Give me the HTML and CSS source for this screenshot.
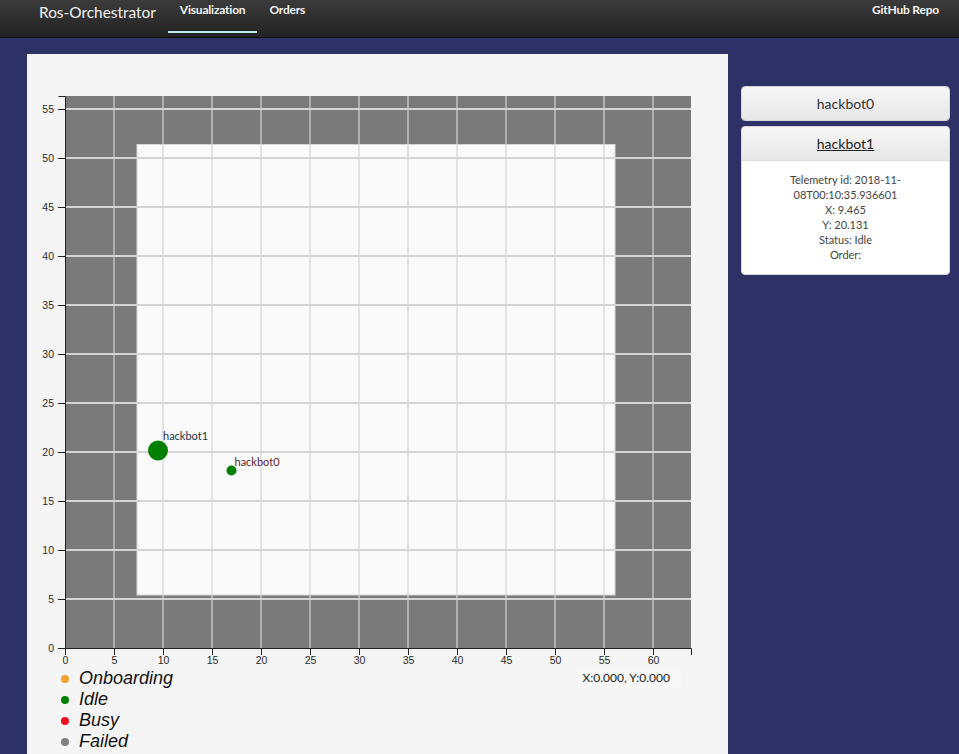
FILE: index.html
```html
<!DOCTYPE html>
<html>
<head>
<meta charset="utf-8">
<link rel="stylesheet" href="styles.css">
</head>
<body>
<nav class="navbar">
  <div class="brand">Ros-Orchestrator</div>
  <a class="nav-item active">Visualization</a>
  <a class="nav-item">Orders</a>
  <a class="nav-item right">GitHub Repo</a>
</nav>
<div class="layout">
  <main class="panel">
    <svg class="chart" width="701" height="614" viewBox="27 54 701 614" xmlns="http://www.w3.org/2000/svg">
      <rect x="65" y="96" width="626" height="552" fill="#7a7a7a"/>
      <rect x="137" y="144.5" width="478" height="450.5" fill="#fafafa" stroke="#d8d8d8" stroke-width="1"/>
      <g stroke="#d4d4d4" stroke-width="1.2">
        <line x1="114" y1="96" x2="114" y2="648"/>
        <line x1="163" y1="96" x2="163" y2="648"/>
        <line x1="212" y1="96" x2="212" y2="648"/>
        <line x1="261" y1="96" x2="261" y2="648"/>
        <line x1="310" y1="96" x2="310" y2="648"/>
        <line x1="359" y1="96" x2="359" y2="648"/>
        <line x1="408" y1="96" x2="408" y2="648"/>
        <line x1="457" y1="96" x2="457" y2="648"/>
        <line x1="506" y1="96" x2="506" y2="648"/>
        <line x1="555" y1="96" x2="555" y2="648"/>
        <line x1="604" y1="96" x2="604" y2="648"/>
        <line x1="653" y1="96" x2="653" y2="648"/>
      </g>
      <g stroke="#d4d4d4" stroke-width="1.8">
        <line x1="65" y1="599" x2="691" y2="599"/>
        <line x1="65" y1="550" x2="691" y2="550"/>
        <line x1="65" y1="501" x2="691" y2="501"/>
        <line x1="65" y1="452" x2="691" y2="452"/>
        <line x1="65" y1="403" x2="691" y2="403"/>
        <line x1="65" y1="354" x2="691" y2="354"/>
        <line x1="65" y1="305" x2="691" y2="305"/>
        <line x1="65" y1="256" x2="691" y2="256"/>
        <line x1="65" y1="207" x2="691" y2="207"/>
        <line x1="65" y1="158" x2="691" y2="158"/>
        <line x1="65" y1="109" x2="691" y2="109"/>
      </g>
      <g stroke="#222" stroke-width="1" fill="none">
        <path d="M58.5 96.5 H65.5 V648.5 H691.5 V655"/>
        <g>
          <line x1="58" y1="648.5" x2="65" y2="648.5"/>
          <line x1="58" y1="599.5" x2="65" y2="599.5"/>
          <line x1="58" y1="550.5" x2="65" y2="550.5"/>
          <line x1="58" y1="501.5" x2="65" y2="501.5"/>
          <line x1="58" y1="452.5" x2="65" y2="452.5"/>
          <line x1="58" y1="403.5" x2="65" y2="403.5"/>
          <line x1="58" y1="354.5" x2="65" y2="354.5"/>
          <line x1="58" y1="305.5" x2="65" y2="305.5"/>
          <line x1="58" y1="256.5" x2="65" y2="256.5"/>
          <line x1="58" y1="207.5" x2="65" y2="207.5"/>
          <line x1="58" y1="158.5" x2="65" y2="158.5"/>
          <line x1="58" y1="109.5" x2="65" y2="109.5"/>
        </g>
        <g>
          <line x1="65.5" y1="648" x2="65.5" y2="655"/>
          <line x1="114.5" y1="648" x2="114.5" y2="655"/>
          <line x1="163.5" y1="648" x2="163.5" y2="655"/>
          <line x1="212.5" y1="648" x2="212.5" y2="655"/>
          <line x1="261.5" y1="648" x2="261.5" y2="655"/>
          <line x1="310.5" y1="648" x2="310.5" y2="655"/>
          <line x1="359.5" y1="648" x2="359.5" y2="655"/>
          <line x1="408.5" y1="648" x2="408.5" y2="655"/>
          <line x1="457.5" y1="648" x2="457.5" y2="655"/>
          <line x1="506.5" y1="648" x2="506.5" y2="655"/>
          <line x1="555.5" y1="648" x2="555.5" y2="655"/>
          <line x1="604.5" y1="648" x2="604.5" y2="655"/>
          <line x1="653.5" y1="648" x2="653.5" y2="655"/>
        </g>
      </g>
      <g class="tick" text-anchor="end">
        <text x="54" y="652">0</text>
        <text x="54" y="603">5</text>
        <text x="54" y="554">10</text>
        <text x="54" y="505">15</text>
        <text x="54" y="456">20</text>
        <text x="54" y="407">25</text>
        <text x="54" y="358">30</text>
        <text x="54" y="309">35</text>
        <text x="54" y="260">40</text>
        <text x="54" y="211">45</text>
        <text x="54" y="162">50</text>
        <text x="54" y="113">55</text>
      </g>
      <g class="tick" text-anchor="middle">
        <text x="65.5" y="664">0</text>
        <text x="114.5" y="664">5</text>
        <text x="163.5" y="664">10</text>
        <text x="212.5" y="664">15</text>
        <text x="261.5" y="664">20</text>
        <text x="310.5" y="664">25</text>
        <text x="359.5" y="664">30</text>
        <text x="408.5" y="664">35</text>
        <text x="457.5" y="664">40</text>
        <text x="506.5" y="664">45</text>
        <text x="555.5" y="664">50</text>
        <text x="604.5" y="664">55</text>
        <text x="653.5" y="664">60</text>
      </g>
      <circle cx="158" cy="450.5" r="10" fill="#008000"/>
      <text class="bot-label bot1" x="163" y="440">hackbot1</text>
      <circle cx="231.5" cy="470.5" r="5" fill="#008000"/>
      <text class="bot-label bot0" x="234.5" y="466">hackbot0</text>
    </svg>
    <div class="below">
      <ul class="legend">
        <li><span class="dot onboarding"></span>Onboarding</li>
        <li><span class="dot idle"></span>Idle</li>
        <li><span class="dot busy"></span>Busy</li>
        <li><span class="dot failed"></span>Failed</li>
      </ul>
      <div class="coords">X:0.000, Y:0.000</div>
    </div>
  </main>
  <aside class="sidebar">
    <div class="card">
      <div class="card-header">hackbot0</div>
    </div>
    <div class="card">
      <div class="card-header"><span class="link">hackbot1</span></div>
      <div class="card-body">
        Telemetry id: 2018-11-<br>08T00:10:35.936601<br>
        X: 9.465<br>
        Y: 20.131<br>
        Status: Idle<br>
        Order:
      </div>
    </div>
  </aside>
</div>
</body>
</html>
```

FILE: styles.css
```css
html, body {
  margin: 0;
  padding: 0;
}
body {
  background: #2e3166;
  font-family: Lato, "Open Sans", sans-serif;
  color: #333;
  min-height: 754px;
  overflow: hidden;
}
.navbar {
  height: 37px;
  border-bottom: 1px solid #0e0e0e;
  background: linear-gradient(to bottom, #3b3b3b 0%, #222222 100%);
  display: flex;
  align-items: stretch;
  padding: 0 20px 0 39px;
  box-sizing: content-box;
}
.brand {
  color: #f2f2f2;
  font-size: 15.4px;
  line-height: 24px;
  margin-right: 12px;
}
.nav-item {
  color: #f4f4f4;
  font-size: 12px;
  font-weight: 700;
  letter-spacing: -0.2px;
  line-height: 20px;
  padding: 0 12px;
  height: 31px;
  box-sizing: border-box;
}
.nav-item.active {
  border-bottom: 2px solid #bfe9ee;
  height: 33px;
}
.nav-item.right {
  margin-left: auto;
  padding: 0;
}
.layout {
  display: flex;
  align-items: flex-start;
  padding: 16px 9px 0 27px;
}
.panel {
  width: 701px;
  min-height: 720px;
  background: #f5f5f5;
}
.chart {
  display: block;
}
.tick {
  font-family: "Liberation Sans", Arial, sans-serif;
  font-size: 10.5px;
  fill: #2a2a2a;
}
.bot-label {
  font-family: Lato, sans-serif;
  font-size: 11px;
}
.bot1 { fill: #1d3350; }
.bot0 { fill: #5a1f2a; }
.below {
  display: flex;
  justify-content: space-between;
  align-items: flex-start;
}
.legend {
  list-style: none;
  margin: 0;
  padding: 0 0 0 34px;
}
.legend li {
  font-family: "Liberation Sans", Arial, sans-serif;
  font-size: 18px;
  font-style: italic;
  color: #111;
  line-height: 21px;
  height: 21px;
  display: flex;
  align-items: center;
}
.dot {
  width: 8px;
  height: 8px;
  border-radius: 50%;
  margin-right: 10px;
}
.dot.onboarding { background: #f5a12e; }
.dot.idle { background: #008000; }
.dot.busy { background: #ee0e22; }
.dot.failed { background: #808080; }
.coords {
  font-size: 12px;
  color: #222;
  line-height: 20px;
  padding: 0 11px 0 6px;
  margin-right: 47px;
  background: #f8f8f8;
}
.sidebar {
  margin-left: 13px;
  margin-top: 32px;
  width: 209px;
  display: flex;
  flex-direction: column;
  gap: 5px;
}
.card {
  border: 1px solid #d6d6d6;
  border-radius: 4px;
  background: #fff;
  overflow: hidden;
}
.card-header {
  height: 33px;
  line-height: 33px;
  text-align: center;
  font-size: 14px;
  color: #333;
  background: linear-gradient(to bottom, #f6f6f6 0%, #e7e7e7 100%);
}
.card + .card .card-header {
  border-bottom: 1px solid #dcdcdc;
}
.link {
  text-decoration: underline;
  color: #222;
}
.card-body {
  text-align: center;
  font-size: 11px;
  line-height: 15px;
  color: #444;
  padding: 11px 10px 12px;
}
```
